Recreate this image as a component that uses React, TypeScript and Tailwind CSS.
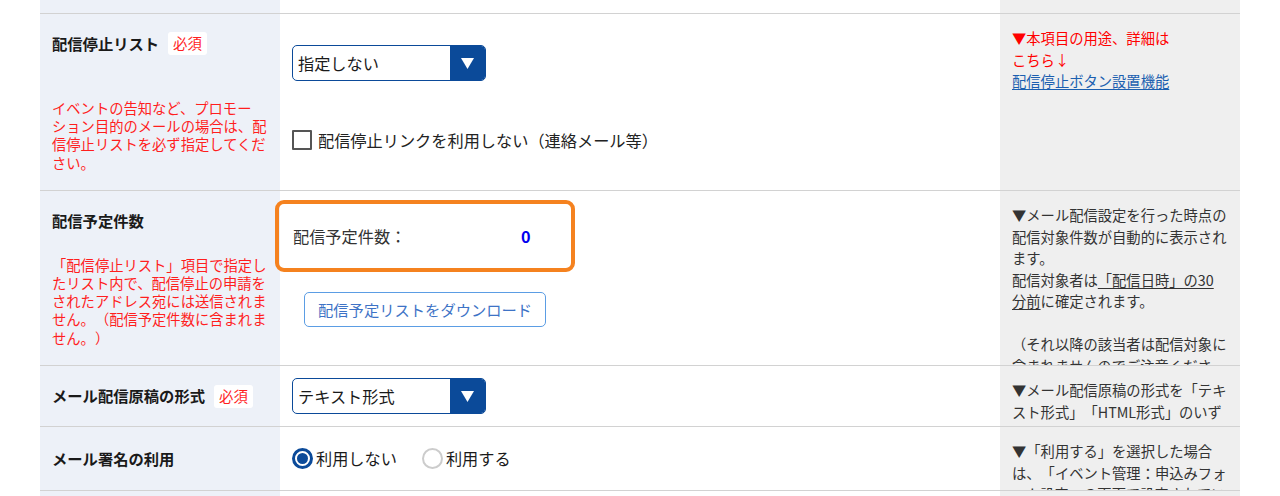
import type { ReactNode } from 'react';

const font = "font-['Noto_Sans_CJK_JP','Noto_Sans',sans-serif]";

// Small white "required" tag shown next to a field name.
const Required = () => (
  <span className="inline-flex items-center justify-center h-[23px] px-[5px] bg-white rounded-[3px] text-[14.4px] text-[#ff1e1e] leading-none">
    必須
  </span>
);

const Label = ({ children, required }: { children: ReactNode; required?: boolean }) => (
  <div className="flex items-center gap-[9px] h-[23px]">
    <span className="text-[15.3px] font-bold text-[#1a1a1a] leading-none">{children}</span>
    {required && <Required />}
  </div>
);

// Red helper text under a field name; small kana never start a line here.
const Note = ({ children }: { children: ReactNode }) => (
  <p className="text-[14.3px] leading-[18.3px] text-[#ff1e1e] [line-break:strict]">{children}</p>
);

// Fake select: white field with a blue arrow block on the right.
const Select = ({ value }: { value: string }) => (
  <div className="flex w-[194px] h-[36px] rounded-[5px] border border-[#0b4a99] overflow-hidden bg-white">
    <div className="flex-1 flex items-center pl-[5px] text-[16.2px] text-[#1a1a1a]">{value}</div>
    <div className="w-[35px] bg-[#0b4a99] flex items-center justify-center">
      <svg width="13" height="11" viewBox="0 0 13 11">
        <polygon points="0,0 13,0 6.5,11" fill="#ffffff" />
      </svg>
    </div>
  </div>
);

const Radio = ({ checked, label }: { checked?: boolean; label: string }) => (
  <label className="flex items-center gap-[3px] text-[16.2px] text-[#1a1a1a]">
    {checked ? (
      <span className="w-[21px] h-[21px] rounded-full border-[3px] border-[#0b4a99] bg-white flex items-center justify-center">
        <span className="w-[11px] h-[11px] rounded-full bg-[#0b4a99]" />
      </span>
    ) : (
      <span className="w-[21px] h-[21px] rounded-full border-2 border-[#cccccc] bg-white" />
    )}
    {label}
  </label>
);

const Row = ({
  h,
  left,
  main,
  side,
  leftClass = '',
  mainClass = '',
}: {
  h: string;
  left?: ReactNode;
  main?: ReactNode;
  side?: ReactNode;
  leftClass?: string;
  mainClass?: string;
}) => (
  <div className={`grid grid-cols-[240px_720px_240px] border-b border-[#d2d2d2] ${h}`}>
    <div className={`bg-[#edf1f8] px-[12px] ${leftClass}`}>{left}</div>
    <div className={`bg-white px-[12px] ${mainClass}`}>{main}</div>
    <div className="bg-[#efefef] pl-[12px] pr-[13px] pt-[13px] overflow-hidden text-[14.3px] leading-[21.5px] text-[#333333]">
      {side}
    </div>
  </div>
);

export default function App() {
  return (
    <div
      lang="ja"
      className={`w-[1280px] h-[496px] overflow-hidden bg-white px-[40px] [text-spacing-trim:space-all] ${font}`}
    >
      <Row h="h-[14px]" />

      <Row
        h="h-[177px]"
        leftClass="flex flex-col justify-between py-[18px]"
        left={
          <>
            <Label required>配信停止リスト</Label>
            <Note>イベントの告知など、プロモーション目的のメールの場合は、配信停止リストを必ず指定してください。</Note>
          </>
        }
        mainClass="pt-[31px]"
        main={
          <>
            <Select value="指定しない" />
            <label className="mt-[48px] flex items-center gap-[6px] h-[22px] text-[16.2px] text-[#222222]">
              <span className="w-[20px] h-[20px] border-2 border-[#555555] rounded-[1px] bg-white" />
              配信停止リンクを利用しない（連絡メール等）
            </label>
          </>
        }
        side={
          <>
            <p className="text-[#ff0000]">
              ▼本項目の用途、詳細は
              <br />
              こちら↓
            </p>
            <a className="text-[#1b5fb0] underline underline-offset-2">配信停止ボタン設置機能</a>
          </>
        }
      />

      <Row
        h="h-[175px]"
        leftClass="flex flex-col justify-between py-[18px]"
        left={
          <>
            <Label>配信予定件数</Label>
            <Note>「配信停止リスト」項目で指定したリスト内で、配信停止の申請をされたアドレス宛には送信されません。（配信予定件数に含まれません。）</Note>
          </>
        }
        mainClass="pt-[9px]"
        main={
          <>
            <div className="-ml-[17px] w-[300px] h-[72px] border-4 border-[#f5821f] rounded-[9px] flex items-center pl-[14px] text-[16.2px] text-[#333333]">
              <span className="w-[228px]">配信予定件数：</span>
              <span className="font-bold text-[#0000ee]">0</span>
            </div>
            <button className="mt-[20px] ml-[12px] h-[35px] px-[13px] rounded-[5px] border border-[#5b9de4] bg-white text-[15.3px] text-[#3e73c6]">
              配信予定リストをダウンロード
            </button>
          </>
        }
        side={
          <>
            <p>▼メール配信設定を行った時点の配信対象件数が自動的に表示されます。</p>
            <p>
              配信対象者は<span className="underline underline-offset-2">「配信日時」の30分前</span>に確定されます。
            </p>
            <p className="mt-[21.5px]">（それ以降の該当者は配信対象に含まれませんのでご注意ください。）</p>
          </>
        }
      />

      <Row
        h="h-[61px]"
        leftClass="flex items-center"
        left={<Label required>メール配信原稿の形式</Label>}
        mainClass="flex items-center"
        main={<Select value="テキスト形式" />}
        side={<p>▼メール配信原稿の形式を「テキスト形式」「HTML形式」のいずれかから選択してください。</p>}
      />

      <Row
        h="h-[64px]"
        leftClass="flex items-center"
        left={<Label>メール署名の利用</Label>}
        mainClass="flex items-center gap-[25px]"
        main={
          <>
            <Radio checked label="利用しない" />
            <Radio label="利用する" />
          </>
        }
        side={<p>▼「利用する」を選択した場合は、「イベント管理：申込みフォーム設定」の画面で設定されている署名が本文の末尾に挿入されます。</p>}
      />

      <Row h="h-[40px]" />
    </div>
  );
}
